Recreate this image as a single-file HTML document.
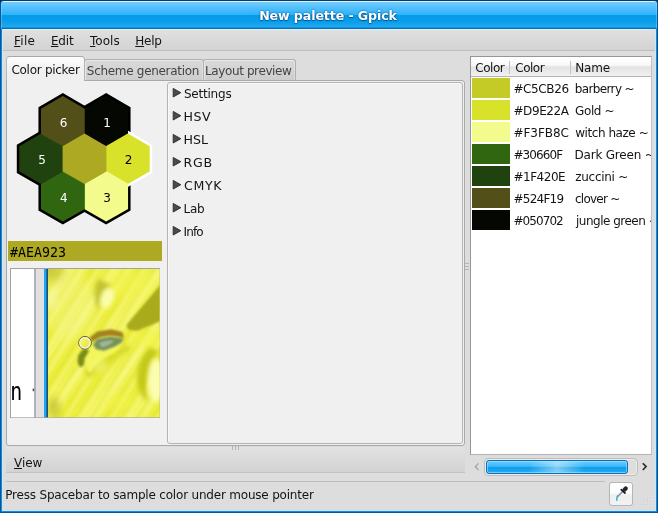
<!DOCTYPE html>
<html><head><meta charset="utf-8"><title>New palette - Gpick</title>
<style>
html,body{margin:0;padding:0;}
body{width:658px;height:513px;overflow:hidden;background:#0b2a45;position:relative;font-family:"DejaVu Sans","Liberation Sans",sans-serif;font-size:12px;color:#141414;}
.abs{position:absolute;}
#win{will-change:transform;position:absolute;left:0;top:0;width:658px;height:513px;background:#04569a;border-radius:4px 4px 0 0;overflow:hidden;}
#topline{position:absolute;left:0;top:0;width:658px;height:1px;background:#0a3a66;}
#mid{position:absolute;left:1px;top:28px;width:656px;height:484px;background:#1c88d2;}
#titlebar{position:absolute;left:1px;top:1px;width:656px;height:28px;border-radius:3px 3px 0 0;box-shadow:inset 1px 0 0 rgba(160,225,255,.35),inset -1px 0 0 rgba(160,225,255,.35);
 background:linear-gradient(#d6f4ff 0,#d6f4ff 1px,#74cbfc 1px,#2db4fc 13.5px,#079ae8 14px,#0a9dea 20px,#1ea9f0 26px,#0d7cc4 27px,#0a5f9f 28px);}
#title{position:absolute;left:-1px;top:1px;width:658px;height:29px;line-height:30px;text-align:center;color:#fff;font-weight:bold;font-size:12.6px;text-shadow:0 0 2px rgba(0,60,120,.9),0 1px 1px rgba(0,60,110,.6);letter-spacing:-0.1px;}
#client{position:absolute;left:3px;top:30px;width:652px;height:480px;background:#dddddd;}
#lb{position:absolute;left:2px;top:29px;width:1px;height:482px;background:#bfeaff;}
#rb{position:absolute;left:655px;top:29px;width:1px;height:482px;background:#bfeaff;}
#bb{position:absolute;left:2px;top:510px;width:654px;height:1px;background:#bfeaff;}
#tb{position:absolute;left:2px;top:29px;width:654px;height:1px;background:#d8f2ff;}
#menubar{position:absolute;left:3px;top:30px;width:652px;height:20px;background:linear-gradient(#e0e0e0,#d3d3d3);border-bottom:1px solid #bdbdbd;}
.t{position:absolute;white-space:nowrap;line-height:15px;height:15px;}
.t u{text-decoration-thickness:1px;text-underline-offset:1px;}
.tab{position:absolute;box-sizing:border-box;border:1px solid #a9a9a9;border-bottom:none;border-radius:3px 3px 0 0;}
.tab.in{top:59px;height:21px;background:linear-gradient(#d9d9d9,#cecece);border-color:#b0b0b0;box-shadow:inset 1px 1px 0 rgba(255,255,255,.45),inset -1px 0 0 rgba(255,255,255,.3);}
.tab.act{top:56px;height:25px;background:linear-gradient(#fefefe,#f3f3f3 40%,#efefef 75%);border-color:#a8a8a8 #b4b4b4 #b4b4b4 #b8b8b8;left:6px;width:79px;z-index:3;border-radius:4px 4px 0 0;}
#nb{position:absolute;box-sizing:border-box;left:6px;top:80px;width:459px;height:366px;border:1px solid #a9a9a9;background:#f0f0f0;border-radius:0 3px 3px 3px;}
#frame{position:absolute;box-sizing:border-box;left:167px;top:82px;width:296px;height:362px;border:1px solid #b4b4b4;border-radius:3px;background:#f0f0f0;box-shadow:inset 1px 1px 0 #f8f8f8;}
#colorbar{position:absolute;left:8px;top:241px;width:154px;height:20px;background:#AEA923;}
#colortxt{position:absolute;left:10px;top:244px;font-family:"DejaVu Sans Mono","Liberation Mono",monospace;font-size:13.3px;line-height:17px;color:#000;}
#zoom{position:absolute;left:10px;top:268px;width:150px;height:150px;overflow:hidden;background:#e3e53c;}
#tree{position:absolute;box-sizing:border-box;left:470px;top:56px;width:182px;height:399px;border:1px solid;border-color:#969696 #c2c2c2 #b4b4b4 #969696;background:#fff;}
#treeclip{position:absolute;left:0;top:0;width:658px;height:513px;clip-path:inset(57px 7px 59px 471px);}
#thead{position:absolute;left:471px;top:57px;width:180px;height:19px;background:linear-gradient(#ffffff 0,#f9f9f9 42%,#e3e3e3 54%,#f1f1f1 100%);border-bottom:1px solid #b4b4b4;}
.sep{position:absolute;top:61px;width:1px;height:13px;background:#c4c4c4;}
.sw{position:absolute;left:472px;width:38px;height:20px;}
#viewbar{position:absolute;left:6px;top:447px;width:459px;height:25px;background:linear-gradient(#e2e2e2,#d2d2d2);border-bottom:1px solid #c2c2c2;}
#statsep{position:absolute;left:6px;top:481px;width:599px;height:1px;background:#bdbdbd;}
#btn{position:absolute;box-sizing:border-box;left:609px;top:482px;width:24px;height:24px;border:1px solid #b5b5b5;border-radius:3px;background:linear-gradient(#ffffff 0,#fcfcfc 46%,#efefef 54%,#f2f2f2 100%);}
#trough{position:absolute;box-sizing:border-box;left:484px;top:458px;width:154px;height:18px;border:1px solid #bdbdbd;border-radius:4px;background:#dedede;box-shadow:inset 0 0 0 1px #ececec;}
#slider{position:absolute;box-sizing:border-box;left:486px;top:460px;width:142px;height:14px;border:1px solid #0b6fb7;border-radius:3px;background:linear-gradient(90deg,rgba(255,255,255,0) 30%,rgba(255,255,255,.45) 50%,rgba(255,255,255,0) 70%),linear-gradient(#6fcdfd 0,#3ab8fb 45%,#0d9bea 55%,#28adf3 100%);box-shadow:inset 0 0 0 1px rgba(170,225,255,.6);}
</style></head><body>
<div id="win">
<div id="topline"></div><div id="mid"></div><div id="titlebar"></div><div id="title">New palette - Gpick</div><div id="client"></div>
<div id="tb"></div><div id="lb"></div><div id="rb"></div><div id="bb"></div><div id="menubar"></div>
<div class="tab in" style="left:84px;width:120px"></div><div class="tab in" style="left:203px;width:93px"></div>
<div id="nb"></div><div class="tab act"></div>
<div id="frame"></div><div id="viewbar"></div>
<svg class="abs" style="left:170px;top:84px" width="14" height="160" viewBox="170 84 14 160"><polygon points="173.2,88.4 180.8,92.7 173.2,97.0" fill="#4a4a4a" stroke="#2a2a2a" stroke-width="0.9" stroke-linejoin="round"/><polygon points="173.2,111.4 180.8,115.7 173.2,120.0" fill="#4a4a4a" stroke="#2a2a2a" stroke-width="0.9" stroke-linejoin="round"/><polygon points="173.2,134.4 180.8,138.7 173.2,143.0" fill="#4a4a4a" stroke="#2a2a2a" stroke-width="0.9" stroke-linejoin="round"/><polygon points="173.2,157.4 180.8,161.7 173.2,166.0" fill="#4a4a4a" stroke="#2a2a2a" stroke-width="0.9" stroke-linejoin="round"/><polygon points="173.2,180.4 180.8,184.7 173.2,189.0" fill="#4a4a4a" stroke="#2a2a2a" stroke-width="0.9" stroke-linejoin="round"/><polygon points="173.2,203.4 180.8,207.7 173.2,212.0" fill="#4a4a4a" stroke="#2a2a2a" stroke-width="0.9" stroke-linejoin="round"/><polygon points="173.2,226.4 180.8,230.7 173.2,235.0" fill="#4a4a4a" stroke="#2a2a2a" stroke-width="0.9" stroke-linejoin="round"/></svg>
<svg class="abs" style="left:0;top:0" width="170" height="240" viewBox="0 0 170 240">
<g fill="none" stroke="#000" stroke-width="5" stroke-linejoin="miter">
<polygon points="106.15,146.60 128.06,133.95 128.06,108.65 106.15,96.00 84.24,108.65 84.24,133.95"/>
<polygon points="106.15,221.60 128.06,208.95 128.06,183.65 106.15,171.00 84.24,183.65 84.24,208.95"/>
<polygon points="62.85,221.60 84.76,208.95 84.76,183.65 62.85,171.00 40.94,183.65 40.94,208.95"/>
<polygon points="41.20,184.10 63.11,171.45 63.11,146.15 41.20,133.50 19.29,146.15 19.29,171.45"/>
<polygon points="62.85,146.60 84.76,133.95 84.76,108.65 62.85,96.00 40.94,108.65 40.94,133.95"/>
</g>
<polygon points="127.80,184.10 149.71,171.45 149.71,146.15 127.80,133.50 105.89,146.15 105.89,171.45" fill="none" stroke="#fff" stroke-width="5"/>
<polygon points="106.15,146.60 128.06,133.95 128.06,108.65 106.15,96.00 84.24,108.65 84.24,133.95" fill="#050702"/>
<polygon points="127.80,184.10 149.71,171.45 149.71,146.15 127.80,133.50 105.89,146.15 105.89,171.45" fill="#D9E22A"/>
<polygon points="106.15,221.60 128.06,208.95 128.06,183.65 106.15,171.00 84.24,183.65 84.24,208.95" fill="#F3FB8C"/>
<polygon points="62.85,221.60 84.76,208.95 84.76,183.65 62.85,171.00 40.94,183.65 40.94,208.95" fill="#30660F"/>
<polygon points="41.20,184.10 63.11,171.45 63.11,146.15 41.20,133.50 19.29,146.15 19.29,171.45" fill="#1F420E"/>
<polygon points="62.85,146.60 84.76,133.95 84.76,108.65 62.85,96.00 40.94,108.65 40.94,133.95" fill="#524F19"/>
<polygon points="84.50,184.10 106.41,171.45 106.41,146.15 84.50,133.50 62.59,146.15 62.59,171.45" fill="#AEA923"/>
<text x="107.0" y="126.7" fill="#fff" text-anchor="middle" font-family="DejaVu Sans,sans-serif" font-size="12">1</text>
<text x="128.6" y="164.2" fill="#000" text-anchor="middle" font-family="DejaVu Sans,sans-serif" font-size="12">2</text>
<text x="107.0" y="201.7" fill="#000" text-anchor="middle" font-family="DejaVu Sans,sans-serif" font-size="12">3</text>
<text x="63.7" y="201.7" fill="#fff" text-anchor="middle" font-family="DejaVu Sans,sans-serif" font-size="12">4</text>
<text x="42.0" y="164.2" fill="#fff" text-anchor="middle" font-family="DejaVu Sans,sans-serif" font-size="12">5</text>
<text x="63.6" y="126.7" fill="#fff" text-anchor="middle" font-family="DejaVu Sans,sans-serif" font-size="12">6</text>
</svg>
<div id="colorbar"></div><div id="colortxt">#AEA923</div>
<div id="zoom"><svg class="abs" style="left:0;top:0" width="150" height="150" viewBox="10 268 150 150">
<defs>
<linearGradient id="zs" gradientUnits="userSpaceOnUse" x1="48" y1="300" x2="59" y2="307" spreadMethod="repeat">
<stop offset="0" stop-color="#fbfba0" stop-opacity="0.42"/><stop offset="0.35" stop-color="#eaec38" stop-opacity="0.05"/><stop offset="0.6" stop-color="#d8da26" stop-opacity="0.28"/><stop offset="0.85" stop-color="#f6f880" stop-opacity="0.2"/><stop offset="1" stop-color="#fbfba0" stop-opacity="0.42"/>
</linearGradient>
<linearGradient id="zs2" gradientUnits="userSpaceOnUse" x1="48" y1="300" x2="75" y2="322" spreadMethod="repeat">
<stop offset="0" stop-color="#fcfca8" stop-opacity="0.45"/><stop offset="0.5" stop-color="#dee028" stop-opacity="0.22"/><stop offset="1" stop-color="#fcfca8" stop-opacity="0.45"/>
</linearGradient>
<filter id="b1" x="-30%" y="-30%" width="160%" height="160%"><feGaussianBlur stdDeviation="0.9"/></filter>
<filter id="b2" x="-30%" y="-30%" width="160%" height="160%"><feGaussianBlur stdDeviation="2"/></filter>
<filter id="b3" x="-30%" y="-30%" width="160%" height="160%"><feGaussianBlur stdDeviation="3.5"/></filter>
<filter id="b6" x="-50%" y="-50%" width="200%" height="200%"><feGaussianBlur stdDeviation="6"/></filter>
<clipPath id="zc"><rect x="48" y="269" width="111.6" height="148.3"/></clipPath>
</defs>
<rect x="10" y="268" width="150" height="150" fill="#a2a2a2"/>
<rect x="11" y="269" width="23" height="148.3" fill="#ffffff"/>
<rect x="34" y="269" width="2" height="148.3" fill="#b4b0b9"/>
<rect x="36" y="269" width="8" height="148.3" fill="#e0e0e0"/>
<rect x="44" y="269" width="2.5" height="148.3" fill="#1ea6ef"/>
<rect x="46.3" y="269" width="1.7" height="148.3" fill="#0b5688"/>
<g clip-path="url(#zc)">
<rect x="48" y="268" width="112" height="150" fill="#eff13e"/>
<rect x="48" y="268" width="112" height="150" fill="url(#zs2)"/>
<rect x="48" y="268" width="112" height="150" fill="url(#zs)"/>
<ellipse cx="70" cy="305" rx="26" ry="34" fill="#f6f790" opacity="0.45" filter="url(#b6)"/>
<!-- top-left olive -->
<ellipse cx="50" cy="271" rx="14" ry="9" fill="#b4b432" opacity="0.7" filter="url(#b6)"/>
<ellipse cx="52" cy="300" rx="5" ry="10" fill="#f6f6b0" opacity="0.6" filter="url(#b3)"/>
<!-- bottom-left olive -->
<ellipse cx="54" cy="408" rx="6" ry="11" fill="#b6b622" opacity="0.65" filter="url(#b3)"/>
<!-- upper bright area -->
<ellipse cx="128" cy="284" rx="28" ry="14" fill="#f3f552" opacity="0.6" filter="url(#b6)"/>
<!-- small droplet -->
<path d="M98 279 Q91 294 98 310 Q102 297 111 285 Z" fill="#bdbd2c" opacity="0.9" filter="url(#b2)"/>
<ellipse cx="107" cy="298" rx="6.5" ry="11" fill="#fbfdb0" opacity="0.97" filter="url(#b2)" transform="rotate(18 107 298)"/>
<!-- dark olive wedge -->
<polygon points="161,284 161,321 137,331 128,329.5 126.5,325" fill="#a9ab1b" filter="url(#b1)"/>
<!-- bright under wedge -->
<ellipse cx="150" cy="340" rx="14" ry="9" fill="#f2f444" opacity="0.6" filter="url(#b3)"/>
<!-- shadow band under droplet -->
<path d="M84 372 Q100 358 128 344 L130 350 Q104 364 90 378 Z" fill="#cdd022" opacity="0.8" filter="url(#b2)"/>
<!-- main droplet body (bright) -->
<path d="M81 352 Q90 336 124 337 Q128 346 118 360 Q106 376 90 376 Q80 368 81 352 Z" fill="#dfe22e" opacity="0.55" filter="url(#b2)"/>
<path d="M85 352 Q96 340 124 339 Q122 350 108 356 Q96 362 90 373 Q83 365 85 352 Z" fill="#f3f55c" filter="url(#b1)"/>
<!-- dark left edge -->
<path d="M83.6 348.5 L78.2 355.5 L77.5 362.3 L80.2 367.5 L83.8 365 L84.6 358.2 L89.5 350.5 Z" fill="#7d8c1a" filter="url(#b1)"/>
<!-- brown arc -->
<path d="M89.5 337.5 L97.3 331.4 L110.9 329.3 L122.5 332 L124 338 L110.9 335.5 L100 337.5 L92 342 Z" fill="#a08420" filter="url(#b1)"/>
<path d="M100 333.5 L111 331.5 L120 333.5 L111 334.5 Z" fill="#b87a1c" opacity="0.8" filter="url(#b1)"/>
<!-- green gray -->
<path d="M97.3 339.1 L110.9 336.4 L123.6 338.4 L121.8 342.5 L115 346.6 L104.1 350.7 L95.9 349.3 L93.2 344.6 Z" fill="#74925c" filter="url(#b1)"/>
<path d="M99 343 Q106 339.5 114 340.5 Q110 345.5 102 347.5 Z" fill="#a9bda8" opacity="0.85" filter="url(#b1)"/>
<ellipse cx="100" cy="366" rx="8" ry="7" fill="#f6f884" opacity="0.6" filter="url(#b3)"/>
<!-- right droplet -->
<path d="M149 348 Q134 366 138 386 Q141 397 147 402 Q145 384 150 368 Q153 358 159 351 Z" fill="#c2c614" opacity="0.95" filter="url(#b2)"/>
<ellipse cx="156" cy="380" rx="8" ry="22" fill="#fbfdb8" opacity="0.95" filter="url(#b2)"/>
<ellipse cx="120" cy="402" rx="18" ry="7" fill="#f2f44c" opacity="0.5" filter="url(#b3)"/>
</g>
<!-- picker -->
<circle cx="85" cy="342.8" r="6.3" fill="none" stroke="#5a563e" stroke-width="1"/>
<circle cx="85" cy="342.8" r="5.1" fill="none" stroke="#f4f2dc" stroke-width="1.5"/>
<!-- zoomed text fragment -->
<text x="0" y="0" transform="translate(10.2 399.6) scale(0.78 1)" font-family="DejaVu Sans Mono,monospace" font-size="25.5" fill="#000">n</text>
<rect x="32.6" y="388.6" width="1.6" height="2.6" fill="#555"/>
</svg></div>
<div id="tree"></div><div id="thead"></div><div class="sep" style="left:509px"></div><div class="sep" style="left:570px"></div>
<div class="sw" style="top:78px;background:#C5CB26"></div>
<div class="sw" style="top:100px;background:#D9E22A"></div>
<div class="sw" style="top:122px;background:#F3FB8C"></div>
<div class="sw" style="top:144px;background:#30660F"></div>
<div class="sw" style="top:166px;background:#1F420E"></div>
<div class="sw" style="top:188px;background:#524F19"></div>
<div class="sw" style="top:210px;background:#050702"></div>
<div class="t" style="left:14.07px;top:34px;letter-spacing:0.259px;"><u>F</u>ile</div>
<div class="t" style="left:50.88px;top:34px;letter-spacing:-0.103px;"><u>E</u>dit</div>
<div class="t" style="left:89.99px;top:34px;letter-spacing:0.048px;"><u>T</u>ools</div>
<div class="t" style="left:135.28px;top:34px;letter-spacing:-0.213px;"><u>H</u>elp</div>
<div class="t" style="left:11.44px;top:63px;letter-spacing:-0.282px;z-index:4">Color picker</div>
<div class="t" style="left:86.85px;top:64px;letter-spacing:-0.303px;color:#444">Scheme generation</div>
<div class="t" style="left:205.07px;top:64px;letter-spacing:-0.396px;color:#444">Layout preview</div>
<div class="t" style="left:183.95px;top:87px;letter-spacing:-0.218px;">Settings</div>
<div class="t" style="left:183.52px;top:109px;letter-spacing:0.473px;font-size:12.6px;">HSV</div>
<div class="t" style="left:183.52px;top:132px;letter-spacing:-0.039px;font-size:12.6px;">HSL</div>
<div class="t" style="left:183.52px;top:155px;letter-spacing:0.694px;font-size:12.6px;">RGB</div>
<div class="t" style="left:184.11px;top:178px;letter-spacing:0.621px;font-size:12.6px;">CMYK</div>
<div class="t" style="left:183.57px;top:202px;letter-spacing:-0.270px;">Lab</div>
<div class="t" style="left:183.57px;top:225px;letter-spacing:-0.865px;">Info</div>
<div id="treeclip"><div class="t" style="left:475.34px;top:61px;letter-spacing:-0.499px;">Color</div>
<div class="t" style="left:515.34px;top:61px;letter-spacing:-0.524px;">Color</div>
<div class="t" style="left:575.17px;top:61px;letter-spacing:-0.148px;">Name</div>
<div class="t" style="left:513.45px;top:82px;letter-spacing:-0.384px;">#C5CB26</div>
<div class="t" style="left:574.66px;top:82px;letter-spacing:-0.617px;">barberry ~</div>
<div class="t" style="left:513.45px;top:104px;letter-spacing:-0.397px;">#D9E22A</div>
<div class="t" style="left:575.04px;top:104px;letter-spacing:-0.391px;">Gold ~</div>
<div class="t" style="left:513.45px;top:126px;letter-spacing:-0.048px;">#F3FB8C</div>
<div class="t" style="left:575.23px;top:126px;letter-spacing:-0.442px;">witch haze ~</div>
<div class="t" style="left:513.45px;top:148px;letter-spacing:-0.892px;">#30660F</div>
<div class="t" style="left:574.48px;top:148px;letter-spacing:-0.203px;">Dark Green ~</div>
<div class="t" style="left:513.45px;top:170px;letter-spacing:-0.481px;">#1F420E</div>
<div class="t" style="left:575.23px;top:170px;letter-spacing:-0.278px;">zuccini ~</div>
<div class="t" style="left:513.45px;top:192px;letter-spacing:-0.747px;">#524F19</div>
<div class="t" style="left:575.04px;top:192px;letter-spacing:-0.765px;">clover ~</div>
<div class="t" style="left:513.45px;top:214px;letter-spacing:-0.924px;">#050702</div>
<div class="t" style="left:575.98px;top:214px;letter-spacing:-0.496px;">jungle green ~</div></div>
<div class="t" style="left:14.10px;top:456px;letter-spacing:-0.112px;"><u>V</u>iew</div>
<div class="t" style="left:5.28px;top:488px;letter-spacing:-0.198px;">Press Spacebar to sample color under mouse pointer</div>
<div id="trough"></div><div id="slider"></div>
<svg class="abs" style="left:470px;top:458px" width="185" height="20" viewBox="470 458 185 20"><path d="M478.5 463.4 L475.3 466.7 L478.5 470" fill="none" stroke="#a4a4a4" stroke-width="1.3"/><path d="M642.8 463.2 L646.1 466.6 L642.8 470" fill="none" stroke="#2a2a2a" stroke-width="1.6"/></svg>
<div id="statsep"></div>
<div id="btn"></div><svg class="abs" style="left:604px;top:478px" width="54" height="35" viewBox="604 478 54 35">
<line x1="622.6" y1="491.4" x2="617.6" y2="496.4" stroke="#8390a8" stroke-width="2" stroke-linecap="round"/>
<line x1="621.6" y1="491.6" x2="617.8" y2="495.4" stroke="#d5dcea" stroke-width="0.9" stroke-linecap="round"/>
<path d="M617.7 495.8 Q616.6 497.6 616.8 500.3" fill="none" stroke="#3cb4d0" stroke-width="1.5" stroke-linecap="round"/>
<line x1="621.3" y1="489.6" x2="625" y2="493" stroke="#1c1c1c" stroke-width="1.8" stroke-linecap="round"/>
<ellipse cx="625.1" cy="488.9" rx="2.9" ry="2.1" transform="rotate(-45 625.2 488.8)" fill="#262626"/>
<g fill="#d0d0d4">
<rect x="650" y="495" width="1.2" height="1.2"/>
<rect x="647" y="498" width="1.2" height="1.2"/><rect x="650" y="498" width="1.2" height="1.2"/>
<rect x="644" y="501" width="1.2" height="1.2"/><rect x="647" y="501" width="1.2" height="1.2"/><rect x="650" y="501" width="1.2" height="1.2"/>
<rect x="641" y="504" width="1.2" height="1.2"/><rect x="644" y="504" width="1.2" height="1.2"/><rect x="647" y="504" width="1.2" height="1.2"/><rect x="650" y="504" width="1.2" height="1.2"/>
</g>
<g fill="#e8e8e8">
<rect x="651" y="496" width="1" height="1"/>
<rect x="648" y="499" width="1" height="1"/><rect x="651" y="499" width="1" height="1"/>
<rect x="645" y="502" width="1" height="1"/><rect x="648" y="502" width="1" height="1"/><rect x="651" y="502" width="1" height="1"/>
<rect x="642" y="505" width="1" height="1"/><rect x="645" y="505" width="1" height="1"/><rect x="648" y="505" width="1" height="1"/><rect x="651" y="505" width="1" height="1"/>
</g>
</svg>
<svg class="abs" style="left:225px;top:255px" width="250" height="200" viewBox="225 255 250 200">
<g fill="#b4b4b4"><rect x="465" y="263" width="4" height="1"/><rect x="465" y="266" width="4" height="1"/><rect x="465" y="269" width="4" height="1"/>
<rect x="232" y="446" width="1" height="4"/><rect x="235" y="446" width="1" height="4"/><rect x="238" y="446" width="1" height="4"/></g>
</svg>
</div>
</body></html>
